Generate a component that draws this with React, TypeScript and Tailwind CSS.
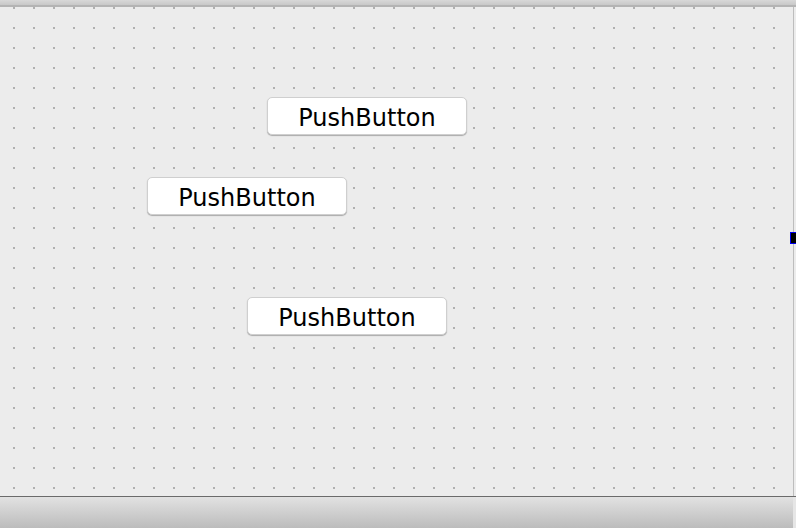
import React from 'react';

type Btn = { x: number; y: number };

const buttons: Btn[] = [
  { x: 267, y: 97 },
  { x: 147, y: 177 },
  { x: 247, y: 297 },
];

function PushButton({ x, y }: Btn) {
  return (
    <button
      className="absolute flex h-[38px] w-[200px] items-center justify-center rounded-[5px] border border-[#cfcfcf] bg-white pt-[3px] text-[24px] leading-none text-black shadow-[0_1px_1px_rgba(0,0,0,0.28)]"
      style={{ left: x, top: y - 7, fontFamily: '"DejaVu Sans", sans-serif' }}
    >
      PushButton
    </button>
  );
}

export default function App() {
  return (
    <div className="flex h-[528px] w-[796px] flex-col overflow-hidden bg-[#ececec]">
      {/* top frame edge */}
      <div className="h-[5px] shrink-0 bg-gradient-to-b from-[#d8d8d8] to-[#c8c8c8]" />
      <div className="h-[2px] shrink-0 bg-[#b4b4b4]" />

      <div className="flex min-h-0 flex-1">
        {/* form canvas */}
        <div className="relative w-[793px] bg-[#ececec] bg-[image:radial-gradient(circle_at_1px_1px,#b0b0b0_1px,transparent_1.4px)] bg-[size:20px_20px] bg-[position:13px_0px]">
          {buttons.map((b, i) => (
            <PushButton key={i} {...b} />
          ))}
          {/* selection handle */}
          <div className="absolute left-[790px] top-[225px] h-[12px] w-[8px] border border-[#0000ee] bg-black" />
        </div>
        <div className="w-[1px] bg-[#bdbdbd]" />
        <div className="flex-1 bg-[#ececec]" />
      </div>

      <div className="h-[1px] shrink-0 bg-[#6b6b6b]" />
      <div className="flex h-[31px] shrink-0">
        <div className="w-[793px] bg-gradient-to-b from-[#e2e2e2] to-[#bcbcbc]" />
        <div className="flex-1 bg-[#e6e6e6]" />
      </div>
    </div>
  );
}
